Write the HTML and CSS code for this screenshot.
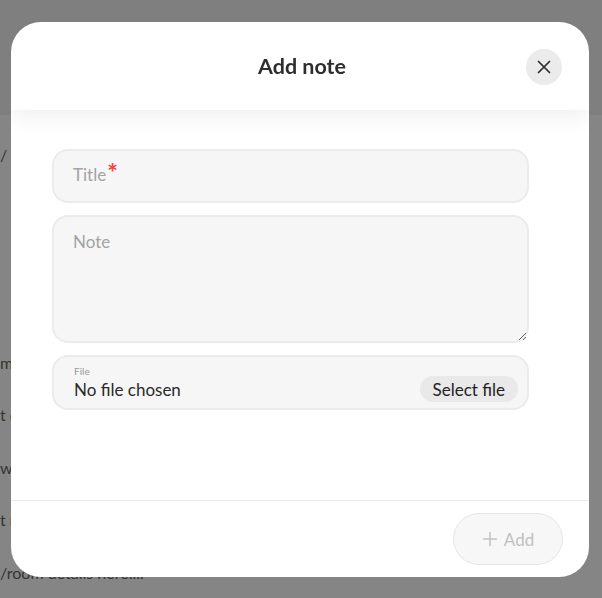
FILE: index.html
```html
<!DOCTYPE html>
<html lang="en">
<head>
    <meta charset="UTF-8">
    <meta name="viewport" content="width=device-width, initial-scale=1.0">
    <title>Add note</title>
    <link rel="stylesheet" href="styles.css">
</head>
<body>
    <!-- Pagina por tras do modal -->
    <div class="page">
        <div class="page-header"></div>
        <ul class="page-lines">
            <li class="first">/</li>
            <li>m</li>
            <li>t c</li>
            <li>w</li>
            <li>t r</li>
            <li>/room details here....</li>
        </ul>
    </div>

    <div class="overlay">
        <div class="modal">
            <div class="modal-header">
                <span></span>
                <h2>Add note</h2>
                <button class="close-button" aria-label="Close">
                    <svg width="16" height="16" viewBox="0 0 16 16" fill="none" stroke="#2b2b2b" stroke-width="1.7" stroke-linecap="round">
                        <path d="M2.5 2.5 L13.5 13.5 M13.5 2.5 L2.5 13.5"/>
                    </svg>
                </button>
            </div>

            <div class="modal-body">
                <div class="field title-field">
                    <span class="placeholder">Title<span class="required">*</span></span>
                </div>
                <textarea class="field note-field" placeholder="Note"></textarea>
                <div class="field file-field">
                    <div class="file-info">
                        <span class="file-label">File</span>
                        <span class="file-name">No file chosen</span>
                    </div>
                    <button class="select-button">Select file</button>
                </div>
            </div>

            <div class="modal-footer">
                <button class="add-button" disabled>
                    <svg width="16" height="16" viewBox="0 0 16 16" fill="none" stroke="#c4c4c4" stroke-width="1.6" stroke-linecap="round">
                        <path d="M8 1.5 V14.5 M1.5 8 H14.5"/>
                    </svg>
                    Add
                </button>
            </div>
        </div>
    </div>
</body>
</html>
```

FILE: styles.css
```css
/* Estilos gerais */
body {
    margin: 0;
    font-family: 'Lato', 'Open Sans', sans-serif;
    color: #333;
    background-color: #ffffff;
    height: 598px;
    overflow: hidden;
}

.page-header {
    height: 115px;
    background-color: #f4f4f4;
}

.page-lines {
    list-style: none;
    margin: 0;
    padding: 0;
    font-size: 16px;
    color: #666;
}

.page-lines li {
    height: 52.5px;
    line-height: 20px;
}

.page-lines li.first {
    margin-top: 30px;
    margin-bottom: 155px;
}

/* Fundo escuro do modal */
.overlay {
    position: fixed;
    inset: 0;
    background-color: rgba(0, 0, 0, 0.48);
    padding: 22px 13px 21px 11px;
    display: flex;
}

.modal {
    flex: 1;
    background-color: #ffffff;
    border-radius: 30px;
    display: flex;
    flex-direction: column;
    overflow: hidden;
}

.modal-header {
    height: 88px;
    flex-shrink: 0;
    display: grid;
    grid-template-columns: 1fr auto 1fr;
    align-items: center;
    padding: 0 27px;
    box-shadow: 0 6px 22px rgba(0, 0, 0, 0.07);
    position: relative;
    z-index: 1;
}

.modal-header h2 {
    margin: 0 0 0 4px;
    font-size: 21.5px;
    font-weight: 700;
    color: #2e2e2e;
}

.close-button {
    justify-self: end;
    width: 36px;
    height: 36px;
    margin-top: 2px;
    border-radius: 50%;
    border: none;
    background-color: #ebebeb;
    display: flex;
    align-items: center;
    justify-content: center;
    padding: 0;
    cursor: pointer;
}

.modal-body {
    flex: 1;
    padding: 39px 60px 0 41px;
    display: flex;
    flex-direction: column;
    gap: 12px;
}

.field {
    box-sizing: border-box;
    background-color: #f6f6f6;
    border: 2px solid #ebebeb;
    border-radius: 16px;
    font-family: inherit;
}

.title-field {
    height: 54px;
    padding: 0 19px;
    display: flex;
    align-items: center;
}

.placeholder {
    font-size: 17px;
    line-height: 20px;
    color: #a3a3a3;
    margin-top: -3px;
}

.required {
    color: #ff3b3b;
    position: relative;
    top: 1px;
    margin-left: 1px;
    font-size: 25px;
    font-weight: 700;
    line-height: 0;
}

.note-field {
    height: 128px;
    padding: 14px 19px;
    font-size: 17px;
    color: #333;
    resize: vertical;
    outline: none;
}

.note-field::placeholder {
    color: #a3a3a3;
}

.file-field {
    height: 55px;
    padding: 0 9px 0 20px;
    display: flex;
    align-items: center;
    justify-content: space-between;
}

.file-info {
    display: flex;
    flex-direction: column;
}

.file-label {
    font-size: 10px;
    color: #9a9a9a;
    margin-bottom: 2px;
}

.file-name {
    font-size: 17px;
    color: #2a2a2a;
}

.select-button {
    margin-top: 13px;
    background-color: #e9e9e9;
    border: none;
    border-radius: 14px;
    height: 26px;
    padding: 0 13px;
    font-family: inherit;
    font-size: 17px;
    color: #222;
}

.modal-footer {
    height: 77px;
    flex-shrink: 0;
    box-sizing: border-box;
    border-top: 1px solid #ececec;
    padding: 12px 26px 12px 0;
    display: flex;
    justify-content: flex-end;
    align-items: flex-start;
}

.add-button {
    width: 110px;
    height: 52px;
    border-radius: 26px;
    border: 1.5px solid #e6e6e6;
    background-color: #f7f7f7;
    color: #c0c0c0;
    font-family: inherit;
    font-size: 17px;
    display: flex;
    align-items: center;
    justify-content: center;
    gap: 6px;
}
```
